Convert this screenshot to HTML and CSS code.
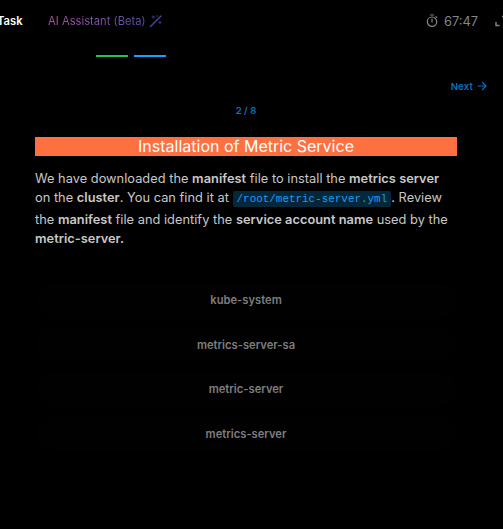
FILE: index.html
```html
<!DOCTYPE html>
<html lang="en">
<head>
<meta charset="utf-8">
<title>Task</title>
<link rel="stylesheet" href="styles.css">
</head>
<body>
<header class="topbar">
  <span class="tab-task">Task</span>
  <span class="tab-ai">AI Assistant (Beta)</span>
  <svg class="wand" width="14" height="14" viewBox="0 0 14 14" fill="none" stroke="#4644a0" stroke-linecap="round"><path d="M1.5 12.5 12 2" stroke-width="1.5"/><path d="M3 3h2.500M4.200 1.800v2.400M8 1.500v1M10 8.500h2M11 7.500v2" stroke-width=".8"/></svg>
  <svg class="clock" width="12" height="14" viewBox="0 0 12 14" fill="none" stroke="#858585" stroke-width="1.2" stroke-linecap="round"><circle cx="6" cy="7.7" r="4.7"/><path d="M4.5 1h3M6 5v3M10 2.6l.8.8"/></svg>
  <span class="time">67:47</span>
  <svg class="expand" width="12" height="12" viewBox="0 0 12 12" fill="none" stroke="#858585" stroke-width="1.4"><path d="M1 7v3.500h3.500M7 1.500H11v4"/></svg>
</header>
<div class="progress"><span class="bar done"></span><span class="bar current"></span></div>
<nav class="next">Next
  <svg width="10" height="10" viewBox="0 0 10 10" fill="none" stroke="#0870bd" stroke-width="1.2" stroke-linecap="round" stroke-linejoin="round"><path d="M1 5h8M5.500 1.500 9 5 5.500 8.500"/></svg>
</nav>
<main class="content">
  <div class="count">2 / 8</div>
  <h1 class="title">Installation of Metric Service</h1>
  <p class="question">We have downloaded the <b>manifest</b> file to install the <b>metrics server</b><br>on the <b>cluster</b>. You can find it at <code>/root/metric-server.yml</code>. Review<br><span class="after-code">the <b>manifest</b> file and identify the <b>service account name</b> used by the</span><br><b>metric-server.</b></p>
  <div class="options">
    <button class="option">kube-system</button>
    <button class="option">metrics-server-sa</button>
    <button class="option">metric-server</button>
    <button class="option">metrics-server</button>
  </div>
</main>
</body>
</html>
```
FILE: styles.css
```css
* { box-sizing: border-box; }
body {
  margin: 0;
  height: 529px;
  overflow: hidden;
  background: #000;
  color: #c8c8c8;
  font-family: Inter, sans-serif;
}
.topbar {
  display: flex;
  align-items: center;
  height: 42px;
  width: 506px;
  margin-left: -3px;
  white-space: nowrap;
}
.topbar svg { flex: none; }
.tab-task { width: 51px; color: #fff; font-size: 11.2px; font-weight: 600; }
.tab-ai {
  font-size: 11.2px;
  letter-spacing: .01px;
  background: linear-gradient(90deg, #b052a4, #5450a8);
  background-clip: text;
  -webkit-background-clip: text;
  color: transparent;
}
.wand { margin-left: 3px; }
.clock { margin-left: auto; }
.time { margin: 0 17px 0 6px; width: 34px; font-size: 12.8px; color: #858585; }
.expand { margin-right: -4px; }
.progress { display: flex; gap: 6px; padding: 13px 0 0 96px; }
.bar { width: 32px; height: 2px; }
.done { background: #22c05c; }
.current { background: #18a0f8; }
.next {
  display: flex;
  justify-content: flex-end;
  align-items: center;
  gap: 4px;
  height: 12px;
  margin: 23px 16px 0 0;
  font-size: 9.6px;
  letter-spacing: .15px;
  font-weight: 600;
  color: #0870bd;
}
.content { width: 422px; margin-left: 35px; padding-top: 13px; }
.count { height: 12px; line-height: 12px; text-align: center; font-size: 9.6px; font-weight: 600; color: #0870bd; }
.title {
  height: 19px;
  margin: 20px 0 13px;
  line-height: 19px;
  text-align: center;
  font-size: 16px;
  font-weight: 400;
  color: #fff;
  background: #ff7040;
}
.question { margin: 0; font-size: 12.8px; line-height: 19.1px; letter-spacing: .025px; white-space: nowrap; }
b { font-weight: 600; }
code {
  padding: 2px 4px;
  border-radius: 2px;
  font-family: "Liberation Mono", monospace;
  font-size: 10.88px;
  color: #18a0f8;
  background: #06263a;
}
.after-code { display: inline-block; padding-top: 1px; }
.options { display: grid; gap: 10px; margin-top: 34.8px; }
.option {
  height: 34.4px;
  padding: 0;
  border: 0;
  border-radius: 18px;
  background: #010101;
  color: #7e7e7e;
  font: 600 11.2px Inter, sans-serif;
}
```
